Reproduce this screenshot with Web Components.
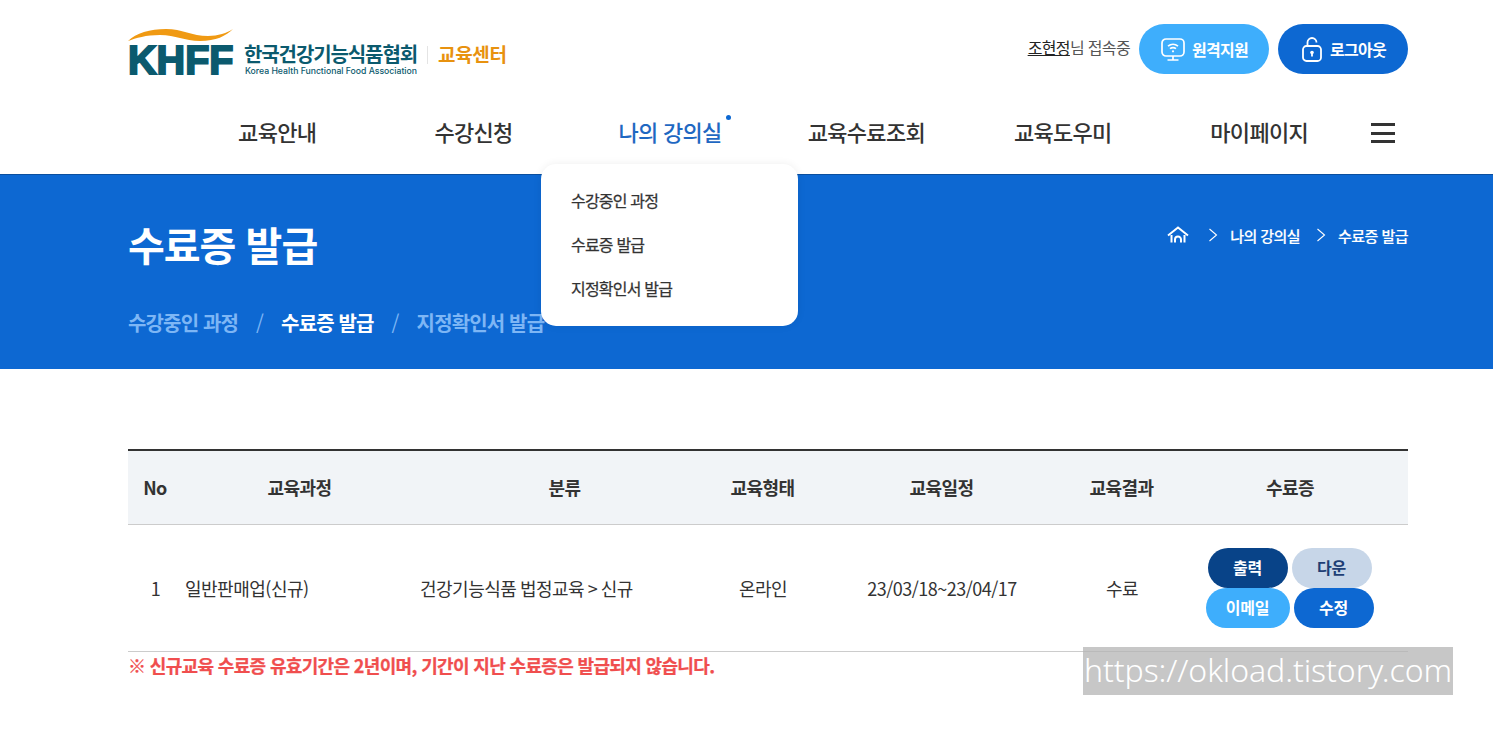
<!DOCTYPE html>
<html lang="ko"><head><meta charset="utf-8"><title>수료증 발급</title>
<style>
html,body{margin:0;padding:0;background:#fff;font-family:"Noto Sans CJK KR","Noto Sans",sans-serif;color:#333}
body{width:1493px;height:735px;overflow:hidden;position:relative}
</style></head><body>
<site-header></site-header>
<page-banner></page-banner>
<cert-table></cert-table>
<water-mark>https://okload.tistory.com</water-mark>
<script>
function def(name,html){customElements.define(name,class extends HTMLElement{constructor(){super();this.attachShadow({mode:'open'}).innerHTML=html}})}
def('khff-logo',`<style>
:host{display:flex;align-items:flex-start;height:50px;color:#0b5a6e}
.mark{position:relative;width:106px;height:50px;flex:none}
svg{position:absolute;left:0;top:0}
.k{position:absolute;left:0;top:11px;font:700 41px/46px "Liberation Sans",sans-serif;-webkit-text-stroke:2px #0b5a6e;color:#0b5a6e;transform:scale(.965,1);transform-origin:0 0;white-space:nowrap}
.t{margin-left:10px;padding-top:16px;display:flex;flex-direction:column}
.ko{font-size:20px;font-weight:700;line-height:24px;letter-spacing:-1.1px;white-space:nowrap}
.en{font:500 8.7px/11px "Inter",sans-serif;white-space:nowrap;letter-spacing:-.02px;margin-left:1px}
.bar{width:1px;height:18px;background:#e4e4e4;margin:20px 10px 0 10px}
.edu{font-size:19px;font-weight:700;color:#e8920f;line-height:24px;padding-top:16px;letter-spacing:-.3px;white-space:nowrap}
</style><div class="mark"><svg width="107" height="24" viewBox="0 0 107 24"><path fill="#f09a13" d="M0 15C8 7 22 3 38 3C54 3 64 10 80 10C90 10 99 7 105 3C98 10 88 15 72 15C56 15 48 9 32 9C18 9 8 12 0 15Z"/></svg><span class="k">KHFF</span></div>
<div class="t"><span class="ko">한국건강기능식품협회</span><span class="en">Korea Health Functional Food Association</span></div><span class="bar"></span><span class="edu">교육센터</span>`);
def('pill-btn',`<style>
:host{display:inline-flex;align-items:center;justify-content:center;gap:6px;width:130px;height:50px;border-radius:25px;background:var(--bg);color:#fff;font-size:16px;font-weight:700;letter-spacing:-.7px}
::slotted(svg){flex:none}
</style><slot name="i"></slot><slot></slot>`);
def('main-nav',`<style>
:host{display:flex;align-items:center;height:74px;padding:0 13px 0 51px;position:relative;font-size:22px;font-weight:500;color:#333;letter-spacing:-.7px}
a{flex:0 0 196.4px;text-align:center;white-space:nowrap;position:relative;padding-bottom:4px;box-sizing:border-box}
a.on{color:#1f68c2}
a.on i{position:absolute;left:154px;top:0;width:5px;height:5px;border-radius:50%;background:#0d68d2}
.h{margin-left:auto;width:24px;height:20px;display:flex;flex-direction:column;justify-content:space-between}
.h b{height:3px;background:#333;display:block}
.drop{position:absolute;left:413px;top:68px;width:257px;height:162px;box-sizing:border-box;padding:14px 30px;background:#fff;border-radius:15px;box-shadow:0 0 8px rgba(0,0,0,.07);z-index:5;font-size:16px;font-weight:400;letter-spacing:-.8px;color:#333}
.drop div{height:44px;line-height:44px;-webkit-text-stroke:.25px #333}
</style><a>교육안내</a><a>수강신청</a><a class="on">나의 강의실<i></i></a><a>교육수료조회</a><a>교육도우미</a><a>마이페이지</a><span class="h"><b></b><b></b><b></b></span>
<div class="drop"><div>수강중인 과정</div><div>수료증 발급</div><div>지정확인서 발급</div></div>`);
def('site-header',`<style>
:host{display:block;height:175px;background:#fff;border-bottom:1px solid #0b4f9e;box-sizing:border-box;position:relative;z-index:2}
.w{width:1280px;margin-left:128px}
.top{display:flex;align-items:flex-start;justify-content:space-between;height:96px;padding-top:24px;box-sizing:border-box}
.r{display:flex;align-items:center;gap:9px}
.u{font-size:16px;letter-spacing:-.65px;color:#555;white-space:nowrap;margin-top:-5px}
.u u{color:#222}
.btns{display:flex;gap:9px}
khff-logo{margin-top:2px}
</style><div class="w"><div class="top"><khff-logo></khff-logo><div class="r"><span class="u"><u>조현정</u>님 접속중</span><div class="btns">
<pill-btn style="--bg:#3eaefc"><svg slot="i" width="26" height="26" viewBox="0 0 26 26" fill="none" stroke="#fff" stroke-width="1.7"><rect x="2" y="3" width="22" height="17" rx="4"/><path d="M13 20v3.500M7.500 24h11M8 10.200c3-2.600 7-2.600 10 0M10 12.700c1.800-1.400 4.200-1.400 6 0"/><circle cx="13" cy="15.300" r="1.100" fill="#fff" stroke="none"/></svg>원격지원</pill-btn>
<pill-btn style="--bg:#0d68d2"><svg slot="i" width="24" height="26" viewBox="0 0 24 26" fill="none" stroke="#fff" stroke-width="1.8"><rect x="3" y="10" width="18" height="15" rx="3.500"/><path d="M7.500 10V6.500a4.500 4.500 0 0 1 9 0"/><circle cx="12" cy="16.500" r="1.800" fill="#fff" stroke="none"/><path d="M12 17v3.500" stroke-width="1.800"/></svg>로그아웃</pill-btn>
</div></div></div><main-nav></main-nav></div>`);
def('page-banner',`<style>
:host{display:block;height:194px;background:#0d68d2;color:#fff}
.w{width:1280px;margin-left:128px;height:194px;padding-top:39px;box-sizing:border-box}
.row{display:flex;justify-content:space-between;align-items:flex-start}
h1{margin:0;font-size:40px;line-height:60px;font-weight:700;letter-spacing:-1px}
.c{display:flex;align-items:center;font-size:15px;font-weight:500;letter-spacing:-.55px;height:40px;margin-top:1px;-webkit-text-stroke:.15px #fff}
.c svg{flex:none}
.s{display:flex;align-items:center;margin-top:34px;font-size:20px;font-weight:700;letter-spacing:-.85px;color:#7db6f5;line-height:30px;white-space:nowrap}
.s b{color:#fff;font-weight:700}
.s i{font-style:normal;margin:0 18px;font-weight:400}
</style><div class="w"><div class="row"><h1>수료증 발급</h1><div class="c"><svg width="22" height="18" viewBox="0 0 22 18" fill="none" stroke="#fff" stroke-width="2"><path d="M1 9.500 11 1.500l10 8M4.500 9v7.500M17.500 9v7.500M8 16.500v-3a3 3 0 0 1 6 0v3"/></svg>
<svg style="margin:0 12px 0 19px" width="10" height="16" viewBox="0 0 10 16" fill="none" stroke="#fff" stroke-width="1.100"><path d="M1.500 2l7 6-7 6"/></svg><span>나의 강의실</span>
<svg style="margin:0 12px 0 16px" width="10" height="16" viewBox="0 0 10 16" fill="none" stroke="#fff" stroke-width="1.100"><path d="M1.500 2l7 6-7 6"/></svg><span>수료증 발급</span></div></div>
<div class="s"><span>수강중인 과정</span><i>/</i><b>수료증 발급</b><i>/</i><span>지정확인서 발급</span></div></div>`);
def('mini-btn',`<style>
:host{display:inline-flex;align-items:center;justify-content:center;box-sizing:border-box;padding-bottom:2px;height:40px;width:var(--w,80px);border-radius:20px;background:var(--bg);color:var(--fg,#fff);font-size:16px;font-weight:700;letter-spacing:-.25px}
</style><slot></slot>`);
def('cert-table',`<style>
:host{display:block;width:1280px;margin:80px 0 0 128px;font-size:18px;color:#333;letter-spacing:-.5px;position:relative}
table{width:1280px;border-collapse:collapse;table-layout:fixed;border-top:2px solid #333}
th{height:71px;padding:0 1px 2px 0;background:#f1f4f7;font-weight:700;border-bottom:1px solid #ccc;color:#333;font-size:18px;letter-spacing:-.55px}
td{height:126px;padding:0;text-align:center;border-bottom:1px solid #ccc;font-weight:400;color:#333}
td.l{padding-right:2px}
.b{display:flex;flex-wrap:wrap;justify-content:center;width:172px;margin:0 auto;gap:0 4px}
.n{margin:3px 0 0;font-size:18px;line-height:20px;font-weight:700;color:#f04e4e;letter-spacing:-.65px;-webkit-text-stroke:.25px #f04e4e}
</style><table><colgroup><col style="width:55px"><col style="width:234px"><col style="width:296px"><col style="width:100px"><col style="width:258px"><col style="width:102px"><col style="width:235px"></colgroup>
<tr><th>No</th><th>교육과정</th><th>분류</th><th>교육형태</th><th>교육일정</th><th>교육결과</th><th>수료증</th></tr>
<tr><td>1</td><td style="text-align:left;padding-left:2px">일반판매업(신규)</td><td style="text-align:left;padding-left:3px;word-spacing:-1px">건강기능식품 법정교육 &gt; 신규</td><td>온라인</td><td>23/03/18~23/04/17</td><td>수료</td><td class="l"><div class="b"><mini-btn style="--bg:#084388">출력</mini-btn><mini-btn style="--bg:#c7d6e8;--fg:#1f3f75">다운</mini-btn><mini-btn style="--bg:#3eaefc;--w:84px">이메일</mini-btn><mini-btn style="--bg:#0d68d2">수정</mini-btn></div></td></tr></table>
<p class="n">※ 신규교육 수료증 유효기간은 2년이며, 기간이 지난 수료증은 발급되지 않습니다.</p>`);
def('water-mark',`<style>
:host{position:absolute;left:1083px;top:647px;width:370px;height:48px;background:rgba(180,180,180,.75);color:#fff;font:300 32px/45px "Noto Sans",sans-serif;letter-spacing:-.08px;white-space:nowrap;text-align:center;overflow:visible}
</style><slot></slot>`);
</script></body></html>
